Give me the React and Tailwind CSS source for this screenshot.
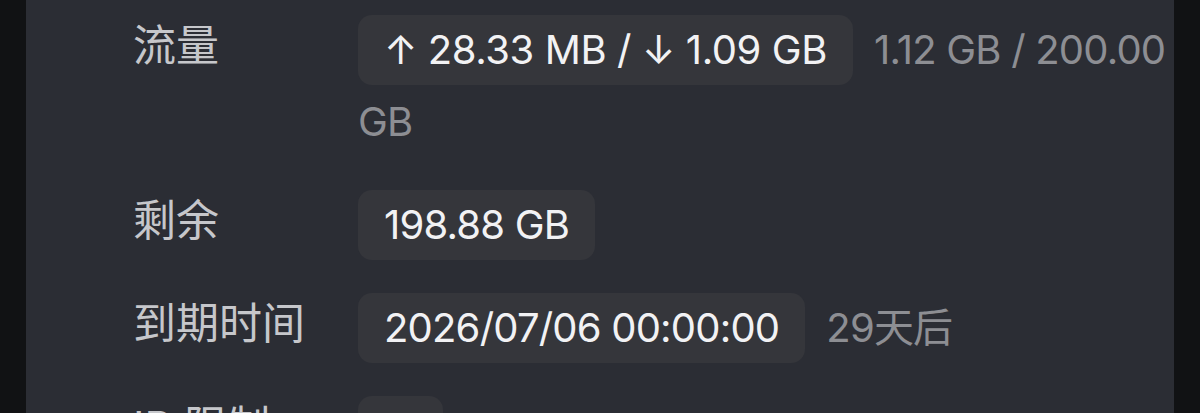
export default function App() {
  const font = { fontFamily: 'Inter, "Noto Sans CJK SC", sans-serif' };
  const Chip = ({ children, extra = '' }) => (
    <span className={`inline-block h-[70px] my-[1px] px-[26px] rounded-[14px] bg-[#35363b] text-[#f2f2f4] align-top leading-[70px] mr-[21px] ${extra}`}>
      {children}
    </span>
  );
  const Row = ({ label, children }) => (
    <div className="flex mb-[31px]">
      <div className="w-[225px] shrink-0 text-[#c6c7cb] text-[43px] leading-[62px] tracking-normal">{label}</div>
      <div className="flex-1 leading-[72px] text-[#8d8e93]">{children}</div>
    </div>
  );
  return (
    <div className="w-[1200px] h-[413px] overflow-hidden bg-[#111214] flex" style={font}>
      <div className="w-[26px] shrink-0" />
      <div className="flex-1 bg-[#2b2d34] pt-[14px] pl-[107px] pr-[4px] text-[40px] tracking-[-0.8px]">
        <Row label="流量">
          <Chip extra="tracking-[-0.4px]">↑ 28.33 MB / ↓ 1.09 GB</Chip>
          1.12 GB / 200.00 GB
        </Row>
        <Row label="剩余">
          <Chip>198.88 GB</Chip>
        </Row>
        <Row label="到期时间">
          <Chip>2026/07/06 00:00:00</Chip>
          29天后
        </Row>
        <Row label="IP 限制">
          <Chip extra="w-[85px] text-center px-0">3</Chip>
        </Row>
      </div>
      <div className="w-[26px] shrink-0" />
    </div>
  );
}
